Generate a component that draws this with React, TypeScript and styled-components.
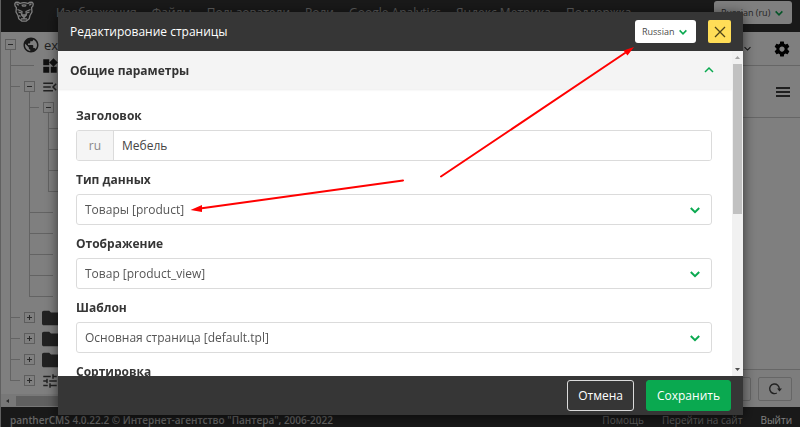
import React from "react";
import styled, { createGlobalStyle, css } from "styled-components";

const GlobalStyle = createGlobalStyle`
  * { box-sizing: border-box; }
  body {
    margin: 0;
    overflow: hidden;
    font-family: "Open Sans", "Noto Sans", sans-serif;
    font-size: 12px;
    color: #333;
  }
  button, input, select { font: inherit; margin: 0; }
`;

const green = "#0aa950";
const dark = "#363636";

/* ---------- page behind the dialog ---------- */

const Page = styled.div`
  isolation: isolate;
  height: 100vh;
  display: flex;
  flex-direction: column;
  background: #fff;
  border-left: 1px solid #c0c0c0;
`;

const TopBar = styled.header`
  flex: none;
  height: 32px;
  display: flex;
  align-items: flex-start;
  padding: 1px 8px 0 13px;
  background: #333;
`;

const Menu = styled.nav`
  display: flex;
  flex: 1;
  gap: 15px;
  margin-left: 22px;
  line-height: 24px;
`;

const MenuLink = styled.a`
  color: #b4b4b4;
  text-decoration: none;
  white-space: nowrap;
`;

const Workspace = styled.div`
  flex: 1;
  min-height: 0;
  display: flex;
`;

const TreePanel = styled.aside`
  width: 240px;
  display: flex;
  flex-direction: column;
  border-right: 1px solid #ccc;
`;

const TreeList = styled.div`
  flex: 1;
  min-height: 0;
  overflow: hidden;
  padding-top: 2px;
`;

const TreeRow = styled.div`
  height: 21px;
  display: flex;
  align-items: center;
  color: #444;
  font-size: 13px;
`;

type GuideKind = "root" | "pass" | "tee" | "corner" | "dash" | "none";

const Guide = styled.span<{ $kind: GuideKind }>`
  position: relative;
  flex: none;
  width: 19px;
  height: 21px;
  display: flex;
  align-items: center;
  justify-content: center;
  &::before {
    content: "";
    position: absolute;
    left: 9px;
    width: 1px;
    background: #c6c6c6;
    ${({ $kind }) => ($kind === "pass" || $kind === "tee") && css`top: 0; bottom: 0;`}
    ${({ $kind }) => $kind === "corner" && css`top: 0; bottom: 10px;`}
    ${({ $kind }) => $kind === "root" && css`top: 10px; bottom: 0;`}
  }
  &::after {
    content: "";
    position: absolute;
    top: 10px;
    height: 1px;
    right: 0;
    background: #c6c6c6;
    ${({ $kind }) => ($kind === "tee" || $kind === "corner") && css`left: 9px;`}
    ${({ $kind }) => $kind === "dash" && css`left: 0; right: 5px;`}
  }
`;

const Toggle = styled.button`
  position: relative;
  z-index: 1;
  width: 11px;
  height: 11px;
  padding: 0;
  border: 1px solid #bdbdbd;
  background: #fff;
  display: grid;
  place-items: center;
`;

const RowIcon = styled.span`
  display: flex;
  margin-left: 2px;
`;

const TreeText = styled.span`
  margin-left: 4px;
`;

const TreeScroll = styled.div`
  flex: none;
  height: 13px;
  display: flex;
  align-items: center;
  gap: 6px;
  padding-left: 4px;
  background: #f1f1f1;
`;

const TreeThumb = styled.div`
  width: 180px;
  height: 10px;
  background: #c1c1c1;
`;

const Main = styled.main`
  flex: 1;
  display: flex;
  flex-direction: column;
`;

const MainRow = styled.div<{ $height: number }>`
  flex: none;
  height: ${({ $height }) => $height}px;
  display: flex;
  align-items: center;
  justify-content: flex-end;
  padding-right: 9px;
  gap: 22px;
  border-bottom: 1px solid #ccc;
`;

const MainFooter = styled.div`
  flex: none;
  margin-top: auto;
  height: 38px;
  display: flex;
  justify-content: flex-end;
  gap: 7px;
  padding: 7px 8px 0 0;
  border-top: 1px solid #ccc;
  background: #fafafa;
`;

const IconButton = styled.button`
  display: grid;
  place-items: center;
  padding: 0;
  border: 0;
  background: none;
  color: #000;
`;

const SquareButton = styled(IconButton)`
  width: 34px;
  height: 24px;
  border: 1px solid #ccc;
  border-radius: 2px;
  color: #444;
`;

const BottomBar = styled.footer`
  flex: none;
  height: 20px;
  display: flex;
  padding: 7px 8px 0 9px;
  background: #333;
  color: #ccc;
  font-size: 10px;
  line-height: 13px;
  white-space: nowrap;
`;

const Copyright = styled.span`
  flex: 1;
  font-weight: 600;
`;

const BottomLinks = styled.nav`
  display: flex;
  gap: 18px;
`;

const BottomLink = styled.a<{ $strong?: boolean }>`
  color: ${({ $strong }) => ($strong ? "#fff" : "#bbb")};
  text-decoration: none;
`;

/* ---------- dialog ---------- */

const Backdrop = styled.div`
  position: fixed;
  inset: 0;
  display: flex;
  padding: 12px 57px 12px 58px;
  background: rgba(0, 0, 0, 0.5);
`;

const Dialog = styled.section`
  flex: 1;
  min-width: 0;
  display: flex;
  flex-direction: column;
  background: #fff;
  box-shadow: 0 2px 12px rgba(0, 0, 0, 0.6);
`;

const DialogHeader = styled.header`
  flex: none;
  height: 39px;
  display: flex;
  align-items: center;
  gap: 12px;
  padding: 0 12px;
  background: ${dark};
`;

const DialogTitle = styled.h1`
  flex: 1;
  margin: 0;
  font-size: 12px;
  font-weight: 400;
  color: #fff;
`;

const CloseButton = styled.button`
  width: 23px;
  height: 23px;
  padding: 0;
  display: grid;
  place-items: center;
  border: 0;
  border-radius: 2px;
  background: #ffdd57;
  color: #4d4319;
`;

const DialogBody = styled.div`
  flex: 1;
  min-height: 0;
  display: flex;
`;

const Content = styled.div`
  flex: 1;
  min-width: 0;
  overflow: hidden;
`;

const SectionToggle = styled.button`
  width: 100%;
  height: 38px;
  display: flex;
  align-items: center;
  justify-content: space-between;
  padding: 0 18px 0 12px;
  border: 0;
  background: #f4f4f4;
  box-shadow: 0 1px 2px rgba(0, 0, 0, 0.08);
  font-weight: 700;
  color: #333;
`;

const Form = styled.form`
  display: flex;
  flex-direction: column;
  gap: 10px;
  padding: 18px 20px 0 18px;
`;

const Field = styled.div`
  display: flex;
  flex-direction: column;
  gap: 5px;
`;

const Label = styled.label`
  line-height: 18px;
  font-weight: 700;
  color: #363636;
`;

const boxed = css`
  height: 31px;
  border: 1px solid #dbdbdb;
  border-radius: 3px;
  background: #fff;
  color: #555;
`;

const InputGroup = styled.div`
  ${boxed}
  display: flex;
  overflow: hidden;
`;

const Prefix = styled.span`
  width: 37px;
  display: grid;
  place-items: center;
  background: #f5f5f5;
  border-right: 1px solid #dbdbdb;
  color: #888;
`;

const TextInput = styled.input`
  flex: 1;
  min-width: 0;
  padding: 0 8px;
  border: 0;
  outline: 0;
  color: #444;
`;

const SelectWrap = styled.div<{ $inset: number }>`
  position: relative;
  display: grid;
  svg {
    position: absolute;
    right: ${({ $inset }) => $inset}px;
    top: 0;
    bottom: 0;
    margin: auto 0;
    pointer-events: none;
  }
`;

const WideSelect = styled.select`
  ${boxed}
  appearance: none;
  padding: 0 32px 0 8px;
`;

const SmallSelect = styled.select<{ $width: number }>`
  appearance: none;
  width: ${({ $width }) => $width}px;
  height: 23px;
  padding: 0 0 0 7px;
  border: 0;
  border-radius: 3px;
  background: #fff;
  color: #4a4a4a;
  font-size: 9px;
`;

const ScrollTrack = styled.div`
  flex: none;
  width: 11px;
  display: flex;
  flex-direction: column;
  align-items: center;
  justify-content: space-between;
  padding: 5px 0;
  background: #f1f1f1;
`;

const ScrollUpper = styled.div`
  display: flex;
  flex-direction: column;
  align-items: center;
  gap: 4px;
`;

const ScrollThumb = styled.div`
  width: 9px;
  height: 150px;
  background: #c1c1c1;
`;

const DialogFooter = styled.footer`
  flex: none;
  height: 39px;
  display: flex;
  align-items: center;
  justify-content: flex-end;
  gap: 12px;
  padding: 0 12px;
  background: ${dark};
`;

const ActionButton = styled.button<{ $primary?: boolean }>`
  height: 31px;
  padding: 0 10px;
  border: 1px solid ${({ $primary }) => ($primary ? green : "#dbdbdb")};
  border-radius: 3px;
  background: ${({ $primary }) => ($primary ? green : "transparent")};
  color: #fff;
`;

const Arrows = styled.svg`
  position: fixed;
  left: 0;
  top: 0;
  pointer-events: none;
`;

/* ---------- drawings ---------- */

const Chevron = ({ size = 10, up = false, color = green, weight = 2 }) => (
  <svg width={size} height={size} viewBox="0 0 10 10" fill="none" stroke={color} strokeWidth={weight} aria-hidden="true">
    <path d={up ? "M1 7 5 3l4 4" : "M0.8 3 5 7.2 9.2 3"} />
  </svg>
);

const PantherLogo = () => (
  <svg width="20" height="21" viewBox="0 0 20 21" fill="none" stroke="#fff" strokeWidth="1.3" strokeLinejoin="round" aria-hidden="true">
    <path d="M6 2.5C4 .8 1.6 1 1 2.2c-.4 1.5.2 3.3 1.4 4.3L2 11l2 3.5.8 3.3L8 20.2h4l3.2-2.4.8-3.3 2-3.5-.4-4.5C18.800 5.500 19.400 3.700 19 2.200 18.400 1 16 .8 14 2.500 11.500 1.400 8.500 1.400 6 2.500Z" />
    <path d="M2.500 3c1 0 1.800.6 2 1.500M17.500 3c-1 0-1.800.6-2 1.500M8 3.500l.7 2M12 3.500l-.7 2M10 3v3" />
    <path d="M3.500 8.500 8 10.500l-.4 3.500M16.500 8.500 12 10.500l.4 3.500M4.500 11l2.500.8M15.500 11l-2.500.8M7.600 14h4.800L10 16.500ZM10 16.500v1.300M7 18l3-.4 3 .4M5 14.500l1.500 1" />
  </svg>
);

const GlobeIcon = () => (
  <svg width="18" height="18" viewBox="0 0 24 24" fill="#333" aria-hidden="true">
    <path d="M12 2C6.480 2 2 6.480 2 12s4.480 10 10 10 10-4.480 10-10S17.520 2 12 2zm-1 17.930c-3.950-.49-7-3.850-7-7.930 0-.62.080-1.210.21-1.790L9 15v1c0 1.100.9 2 2 2v1.930zm6.900-2.540c-.26-.81-1-1.390-1.900-1.390h-1v-3c0-.55-.45-1-1-1H8v-2h2c.55 0 1-.45 1-1V7h2c1.100 0 2-.9 2-2v-.41c2.930 1.190 5 4.060 5 7.410 0 2.080-.8 3.970-2.100 5.390z" />
  </svg>
);

const WidgetsIcon = () => (
  <svg width="18" height="18" viewBox="0 0 24 24" fill="#222" aria-hidden="true">
    <path d="M13 13v8h8v-8h-8zM3 21h8v-8H3v8zM3 3v8h8V3H3zm13.660-1.310L11 7.340 16.660 13l5.660-5.660-5.660-5.650z" />
  </svg>
);

const MenuOpenIcon = () => (
  <svg width="18" height="18" viewBox="0 0 24 24" fill="#444" aria-hidden="true">
    <path d="M3 18h13v-2H3v2zm0-5h10v-2H3v2zm0-7v2h13V6H3zm18 9.590L17.420 12 21 8.410 19.590 7l-5 5 5 5L21 15.590z" />
  </svg>
);

const FolderIcon = () => (
  <svg width="20" height="18" viewBox="1 2 22 20" fill="#444" aria-hidden="true">
    <path d="M10 4H4c-1.100 0-2 .9-2 2v12c0 1.100.9 2 2 2h16c1.100 0 2-.9 2-2V8c0-1.100-.9-2-2-2h-8l-2-2z" />
  </svg>
);

const TuneIcon = () => (
  <svg width="18" height="18" viewBox="0 0 24 24" fill="#444" aria-hidden="true">
    <path d="M3 17v2h6v-2H3zM3 5v2h10V5H3zm10 16v-2h8v-2h-8v-2h-2v6h2zM7 9v2H3v2h4v2h2V9H7zm14 4v-2H11v2h10zm-6-4h2V7h4V5h-4V3h-2v6z" />
  </svg>
);

const GearIcon = () => (
  <svg width="18" height="18" viewBox="0 0 24 24" fill="currentColor" aria-hidden="true">
    <path d="M19.430 12.980c.04-.32.07-.64.07-.98s-.03-.66-.07-.98l2.110-1.650c.19-.15.24-.42.12-.64l-2-3.460c-.12-.22-.39-.3-.61-.22l-2.490 1c-.52-.4-1.080-.73-1.690-.98l-.38-2.650C14.460 2.180 14.250 2 14 2h-4c-.25 0-.46.18-.49.42l-.38 2.650c-.61.25-1.170.59-1.690.98l-2.490-1c-.23-.09-.49 0-.61.22l-2 3.460c-.13.22-.07.49.12.64l2.110 1.650c-.04.32-.07.65-.07.98s.03.66.07.98l-2.110 1.650c-.19.15-.24.42-.12.64l2 3.460c.12.22.39.3.61.22l2.490-1c.52.4 1.080.73 1.690.98l.38 2.650c.03.24.24.42.49.42h4c.25 0 .46-.18.49-.42l.38-2.650c.61-.25 1.170-.59 1.690-.98l2.490 1c.23.09.49 0 .61-.22l2-3.460c.12-.22.07-.49-.12-.64l-2.110-1.650zM12 15.500c-1.930 0-3.500-1.570-3.500-3.500s1.570-3.500 3.500-3.500 3.500 1.570 3.500 3.500-1.570 3.500-3.500 3.500z" />
  </svg>
);

const BarsIcon = () => (
  <svg width="16" height="12" viewBox="0 0 16 12" stroke="currentColor" strokeWidth="1.500" aria-hidden="true">
    <path d="M1 2h14M1 6h14M1 10h14" />
  </svg>
);

const RefreshIcon = () => (
  <svg width="14" height="14" viewBox="0 0 14 14" fill="none" stroke="currentColor" strokeWidth="1.400" aria-hidden="true">
    <path d="M8.800 11A4.800 4.800 0 1 1 11.300 7" />
    <path d="M9 6.500h5L11.500 9.500Z" fill="currentColor" stroke="none" />
  </svg>
);

const CrossIcon = () => (
  <svg width="12" height="12" viewBox="0 0 12 12" stroke="currentColor" strokeWidth="1.300" aria-hidden="true">
    <path d="M1 1 11 11M11 1 1 11" />
  </svg>
);

const SignIcon = ({ plus = false }) => (
  <svg width="7" height="7" viewBox="0 0 7 7" stroke="#555" aria-hidden="true">
    <path d={plus ? "M1 3.500h5M3.500 1v5" : "M1 3.500h5"} />
  </svg>
);

const Triangle = ({ d, fill }: { d: string; fill: string }) => (
  <svg width="5" height="4" viewBox="0 0 5 4" fill={fill} aria-hidden="true">
    <path d={d} />
  </svg>
);

/* ---------- data ---------- */

const menu = ["Изображения", "Файлы", "Пользователи", "Роли", "Google Analytics", "Яндекс Метрика", "Поддержка"];

type Node = { guides: GuideKind[]; box?: "+" | "-"; icon?: React.ReactNode; text?: string };

const leaf = (...guides: GuideKind[]): Node => ({ guides });

const nodes: Node[] = [
  { guides: ["root"], box: "-", icon: <GlobeIcon />, text: "example" },
  { guides: ["tee", "dash"], icon: <WidgetsIcon /> },
  { guides: ["tee", "root"], box: "-", icon: <MenuOpenIcon /> },
  { guides: ["pass", "tee", "root"], box: "-" },
  leaf("pass", "pass", "tee"),
  leaf("pass", "pass", "tee"),
  leaf("pass", "pass", "tee"),
  leaf("pass", "pass", "corner"),
  leaf("pass", "tee", "dash"),
  leaf("pass", "tee", "dash"),
  leaf("pass", "tee", "dash"),
  leaf("pass", "tee", "dash"),
  leaf("pass", "corner", "dash"),
  { guides: ["tee", "none"], box: "+", icon: <FolderIcon /> },
  { guides: ["tee", "none"], box: "+", icon: <FolderIcon /> },
  { guides: ["tee", "none"], box: "+", icon: <FolderIcon /> },
  { guides: ["corner", "none"], box: "+", icon: <TuneIcon /> },
];

const selects = [
  { id: "type", label: "Тип данных", value: "Товары [product]" },
  { id: "view", label: "Отображение", value: "Товар [product_view]" },
  { id: "template", label: "Шаблон", value: "Основная страница [default.tpl]" },
  { id: "sort", label: "Сортировка", value: "По умолчанию" },
];

export default function App() {
  return (
    <>
      <GlobalStyle />
      <Page>
        <TopBar>
          <PantherLogo />
          <Menu>
            {menu.map((item) => (
              <MenuLink href="#" key={item}>{item}</MenuLink>
            ))}
          </Menu>
          <SelectWrap $inset={9}>
            <SmallSelect $width={78} aria-label="Язык сайта">
              <option>Russian (ru)</option>
            </SmallSelect>
            <Chevron size={8} />
          </SelectWrap>
        </TopBar>
        <Workspace>
          <TreePanel>
            <TreeList>
              {nodes.map((node, row) => (
                <TreeRow key={row}>
                  {node.guides.map((kind, i) => (
                    <Guide $kind={kind} key={i}>
                      {node.box && i === node.guides.length - 1 && (
                        <Toggle aria-label={node.box === "+" ? "Развернуть" : "Свернуть"}>
                          <SignIcon plus={node.box === "+"} />
                        </Toggle>
                      )}
                    </Guide>
                  ))}
                  {node.icon && <RowIcon>{node.icon}</RowIcon>}
                  {node.text && <TreeText>{node.text}</TreeText>}
                </TreeRow>
              ))}
            </TreeList>
            <TreeScroll>
              <Triangle d="M4 0v4L1 2Z" fill="#555" />
              <TreeThumb />
            </TreeScroll>
          </TreePanel>
          <Main>
            <MainRow $height={34}>
              <IconButton aria-label="Ещё"><Chevron size={7} color="#222" weight={1.5} /></IconButton>
              <IconButton aria-label="Настройки"><GearIcon /></IconButton>
            </MainRow>
            <MainRow $height={52}>
              <IconButton aria-label="Меню"><BarsIcon /></IconButton>
            </MainRow>
            <MainFooter>
              <SquareButton aria-label="Вперёд"><Chevron size={8} color="#444" weight={1} /></SquareButton>
              <SquareButton aria-label="Обновить"><RefreshIcon /></SquareButton>
            </MainFooter>
          </Main>
        </Workspace>
        <BottomBar>
          <Copyright>pantherCMS 4.0.22.2 © Интернет-агентство "Пантера", 2006-2022</Copyright>
          <BottomLinks>
            <BottomLink href="#">Помощь</BottomLink>
            <BottomLink href="#">Перейти на сайт</BottomLink>
            <BottomLink href="#" $strong>Выйти</BottomLink>
          </BottomLinks>
        </BottomBar>
      </Page>

      <Backdrop>
        <Dialog role="dialog" aria-modal="true" aria-labelledby="dialog-title">
          <DialogHeader>
            <DialogTitle id="dialog-title">Редактирование страницы</DialogTitle>
            <SelectWrap $inset={9}>
              <SmallSelect $width={61} aria-label="Язык">
                <option>Russian</option>
              </SmallSelect>
              <Chevron size={8} />
            </SelectWrap>
            <CloseButton aria-label="Закрыть"><CrossIcon /></CloseButton>
          </DialogHeader>
          <DialogBody>
            <Content>
              <SectionToggle aria-expanded="true">
                Общие параметры
                <Chevron up weight={1.5} />
              </SectionToggle>
              <Form>
                <Field>
                  <Label htmlFor="heading">Заголовок</Label>
                  <InputGroup>
                    <Prefix>ru</Prefix>
                    <TextInput id="heading" defaultValue="Мебель" />
                  </InputGroup>
                </Field>
                {selects.map(({ id, label, value }) => (
                  <Field key={id}>
                    <Label htmlFor={id}>{label}</Label>
                    <SelectWrap $inset={12}>
                      <WideSelect id={id}>
                        <option>{value}</option>
                      </WideSelect>
                      <Chevron />
                    </SelectWrap>
                  </Field>
                ))}
              </Form>
            </Content>
            <ScrollTrack>
              <ScrollUpper>
                <Triangle d="M0 3h5L2.500 0Z" fill="#a3a3a3" />
                <ScrollThumb />
              </ScrollUpper>
              <Triangle d="M0 1h5L2.500 4Z" fill="#505050" />
            </ScrollTrack>
          </DialogBody>
          <DialogFooter>
            <ActionButton>Отмена</ActionButton>
            <ActionButton $primary>Сохранить</ActionButton>
          </DialogFooter>
        </Dialog>
      </Backdrop>

      <Arrows width="800" height="427" viewBox="0 0 800 427" fill="#f00" stroke="#f00" aria-hidden="true">
        <path d="M403 180.500 200 208.500M441 176.500 625 53" strokeWidth="2" strokeLinecap="round" />
        <path d="M190.500 210 202 205v7ZM634 47 623.500 50.500l4 5Z" stroke="none" />
      </Arrows>
    </>
  );
}
